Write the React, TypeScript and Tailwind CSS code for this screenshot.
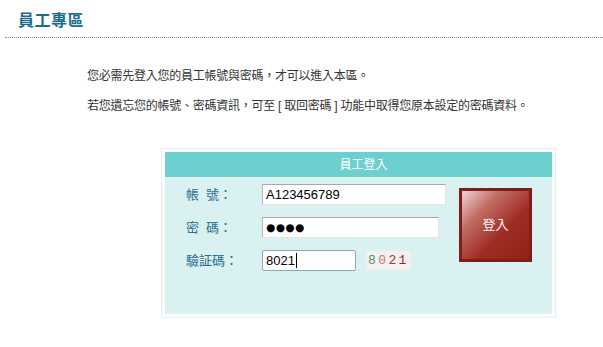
import React from "react";

const cjk = { fontFamily: '"Liberation Sans", "Noto Sans CJK TC", sans-serif' };

function Field({ w, children, focused }: { w: string; children: React.ReactNode; focused?: boolean }) {
  return (
    <div
      className={
        "h-[21px] bg-white flex items-center pl-[3px] text-[13px] text-black " +
        w +
        (focused
          ? " border border-[#8fa6b8] rounded-[2px]"
          : " border border-t-[#a8a8a8] border-l-[#b8b8b8] border-r-[#e4e4e4] border-b-[#e4e4e4]")
      }
      style={{ fontFamily: '"Liberation Sans", "DejaVu Sans", sans-serif' }}
    >
      {children}
    </div>
  );
}

export default function App() {
  return (
    <div className="w-[603px] h-[347px] bg-white overflow-hidden" style={cjk}>
      <div className="h-[37px] pl-[18px] pt-[9px]">
        <h1 className="text-[16px] leading-[24px] font-bold text-[#1c6d8b] tracking-[0.5px]">員工專區</h1>
      </div>
      <div className="ml-[5px] border-t border-dotted border-[#8a8a8a]" />
      <div className="ml-[87px] mt-[29px] text-[12px] leading-[18px] text-[#333] tracking-[-0.25px]">
        <p>您必需先登入您的員工帳號與密碼，才可以進入本區。</p>
        <p className="mt-[12px]">若您遺忘您的帳號、密碼資訊，可至 [ 取回密碼 ] 功能中取得您原本設定的密碼資料。</p>
      </div>
      <div className="ml-[161px] mt-[33px] w-[395px] border border-[#dfeeee] bg-white p-[3px]">
        <div className="h-[25px] bg-[#6dcfcf] text-white text-[12px] flex items-center justify-center pl-[10px]">
          員工登入
        </div>
        <div className="h-[137px] bg-[#daf1f1] flex pl-[21px] pt-[7px]">
          <div className="flex flex-col gap-[12px]">
            <div className="flex items-center">
              <div className="w-[76px] text-[13px] text-[#2a6d8e] leading-[21px]">
                帳<span className="inline-block w-[7px]" />號：
              </div>
              <Field w="w-[184px]">A123456789</Field>
            </div>
            <div className="flex items-center">
              <div className="w-[76px] text-[13px] text-[#2a6d8e] leading-[21px]">
                密<span className="inline-block w-[7px]" />碼：
              </div>
              <Field w="w-[177px]">
                <span className="text-[10.5px] tracking-[0.5px]" style={{ fontFamily: '"DejaVu Sans", sans-serif' }}>
                  ●●●●
                </span>
              </Field>
            </div>
            <div className="flex items-center">
              <div className="w-[76px] text-[13px] text-[#2a6d8e] leading-[21px]">驗証碼：</div>
              <Field w="w-[94px]" focused>
                8021<span className="inline-block w-px h-[15px] bg-black ml-px" />
              </Field>
              <div
                className="ml-[10px] px-[2px] text-[13px] tracking-[2.4px] bg-[#f5f0f0] font-light"
                style={{ fontFamily: '"Liberation Mono", monospace' }}
              >
                <span className="text-[#4a9558]">8</span>
                <span className="text-[#c67a7a]">0</span>
                <span className="text-[#a03a3a]">2</span>
                <span className="text-[#8e2a3a]">1</span>
              </div>
            </div>
          </div>
          <div className="ml-[13px] mt-[4px]">
            <div
              className="w-[73px] h-[74px] border-[3px] border-[#7c1f18] flex items-center justify-center text-white text-[13px]"
              style={{ background: "linear-gradient(135deg, #f0d2d2 0%, #c06a62 30%, #9e2c22 62%, #8f2116 100%)" }}
            >
              登入
            </div>
          </div>
        </div>
      </div>
    </div>
  );
}
